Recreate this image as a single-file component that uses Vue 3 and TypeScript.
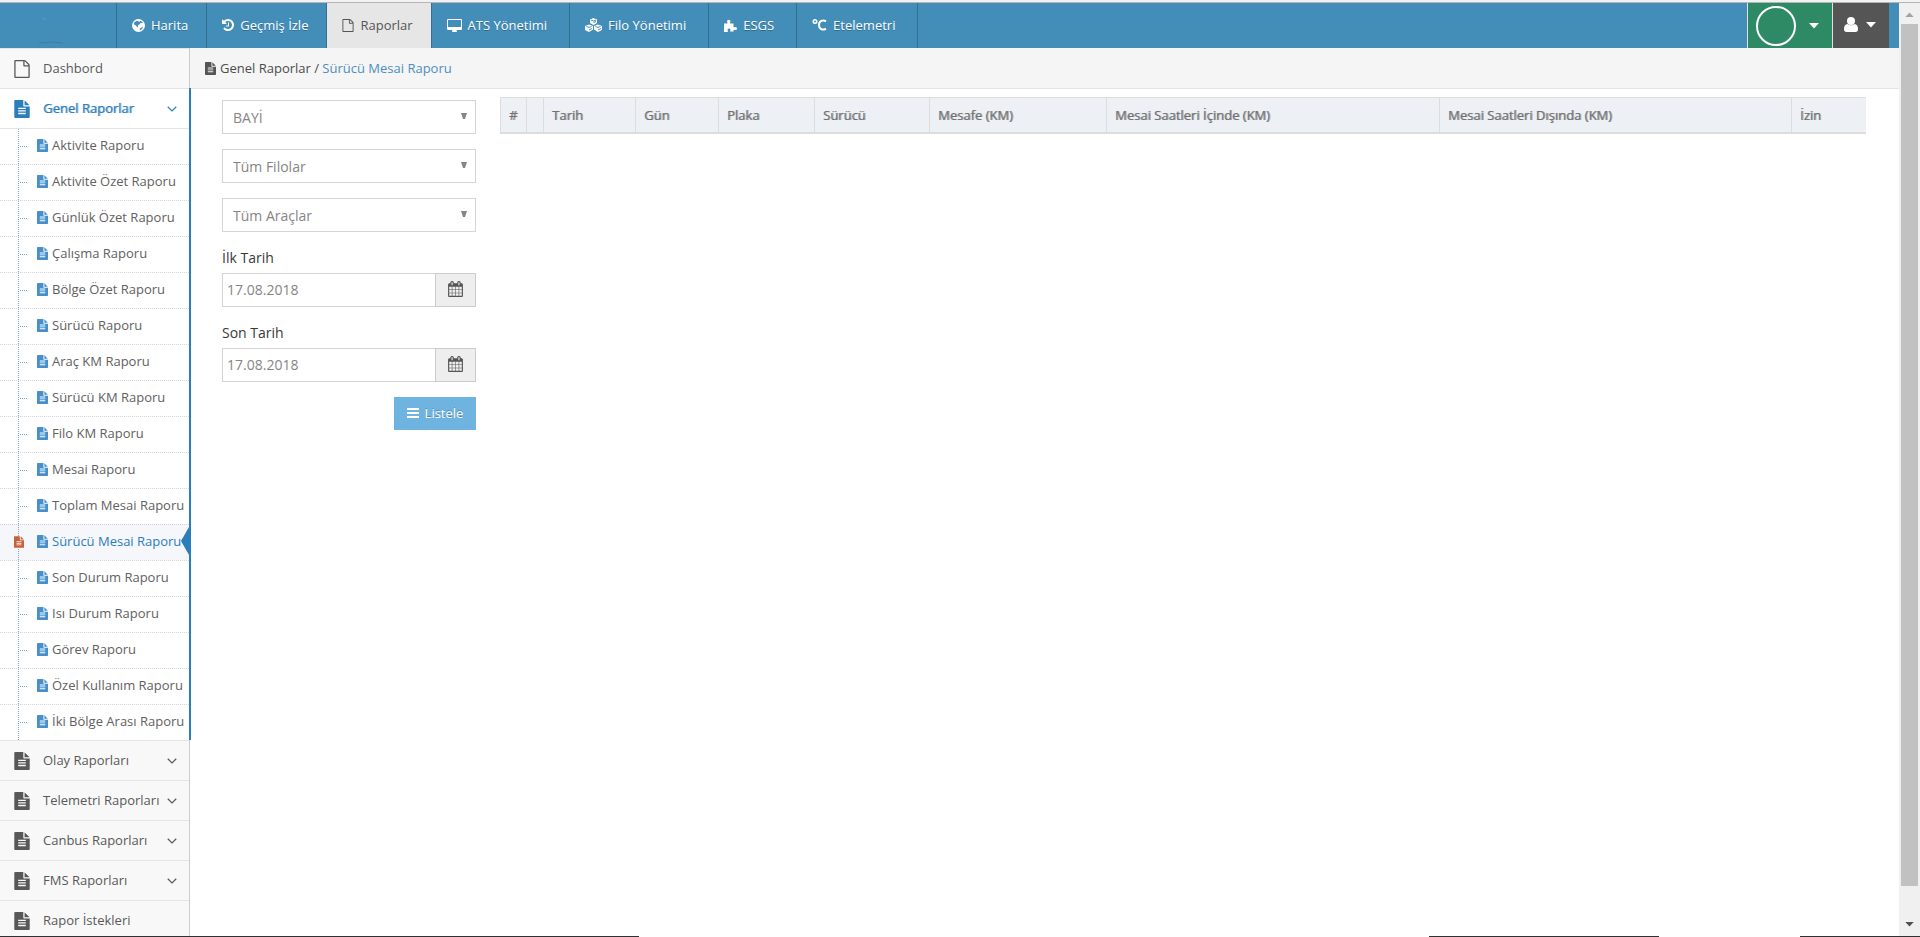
<script setup lang="ts">
interface NavItem { label: string; icon: string; active?: boolean; wide?: boolean }
interface Column { label: string; cls: string }

const nav: NavItem[] = [
  { label: 'Harita', icon: 'globe' },
  { label: 'Geçmiş İzle', icon: 'history' },
  { label: 'Raporlar', icon: 'file', active: true },
  { label: 'ATS Yönetimi', icon: 'desktop', wide: true },
  { label: 'Filo Yönetimi', icon: 'cubes', wide: true },
  { label: 'ESGS', icon: 'puzzle', wide: true },
  { label: 'Etelemetri', icon: 'celsius', wide: true },
]

const reports: string[] = [
  'Aktivite Raporu', 'Aktivite Özet Raporu', 'Günlük Özet Raporu', 'Çalışma Raporu',
  'Bölge Özet Raporu', 'Sürücü Raporu', 'Araç KM Raporu', 'Sürücü KM Raporu',
  'Filo KM Raporu', 'Mesai Raporu', 'Toplam Mesai Raporu', 'Sürücü Mesai Raporu',
  'Son Durum Raporu', 'Isı Durum Raporu', 'Görev Raporu', 'Özel Kullanım Raporu',
  'İki Bölge Arası Raporu',
]
const activeReport = 'Sürücü Mesai Raporu'

const groups = [
  { label: 'Olay Raporları', open: true },
  { label: 'Telemetri Raporları', open: true },
  { label: 'Canbus Raporları', open: true },
  { label: 'FMS Raporları', open: true },
  { label: 'Rapor İstekleri', open: false },
]

const selects = [
  { id: 'dealer', name: 'Bayi', value: 'BAYİ' },
  { id: 'fleet', name: 'Filo', value: 'Tüm Filolar' },
  { id: 'vehicle', name: 'Araç', value: 'Tüm Araçlar' },
]

const dates = [
  { id: 'first-date', label: 'İlk Tarih', value: '17.08.2018' },
  { id: 'last-date', label: 'Son Tarih', value: '17.08.2018' },
]

const columns: Column[] = [
  { label: '#', cls: 'c-no' },
  { label: '', cls: 'c-check' },
  { label: 'Tarih', cls: 'c-date' },
  { label: 'Gün', cls: 'c-day' },
  { label: 'Plaka', cls: 'c-plate' },
  { label: 'Sürücü', cls: 'c-driver' },
  { label: 'Mesafe (KM)', cls: 'c-distance' },
  { label: 'Mesai Saatleri İçinde (KM)', cls: 'c-inside' },
  { label: 'Mesai Saatleri Dışında (KM)', cls: 'c-outside' },
  { label: 'İzin', cls: 'c-leave' },
]
</script>

<template>
  <svg class="defs" aria-hidden="true">
    <symbol id="i-file" viewBox="128 0 1536 1792"><path d="M1596 380q28 28 48 76t20 88v1152q0 40-28 68t-68 28H224q-40 0-68-28t-28-68V96q0-40 28-68t68-28h896q40 0 88 20t76 48zm-444-244v376h376q-10-29-22-41l-313-313q-12-12-41-22zm384 1528V640h-416q-40 0-68-28t-28-68V128H256v1536h1280z" /></symbol>
    <symbol id="i-filetext" viewBox="128 0 1536 1792"><path d="M1596 476q14 14 28 36h-472V40q22 14 36 28zm-476 164h544v1056q0 40-28 68t-68 28H224q-40 0-68-28t-28-68V96q0-40 28-68t68-28h800v544q0 40 28 68t68 28zm160 736v-64q0-14-9-23t-23-9H544q-14 0-23 9t-9 23v64q0 14 9 23t23 9h704q14 0 23-9t9-23zm0-256v-64q0-14-9-23t-23-9H544q-14 0-23 9t-9 23v64q0 14 9 23t23 9h704q14 0 23-9t9-23zm0-256v-64q0-14-9-23t-23-9H544q-14 0-23 9t-9 23v64q0 14 9 23t23 9h704q14 0 23-9t9-23z" /></symbol>
    <symbol id="i-history" viewBox="128 128 1536 1536"><path d="M1664 896q0 156-61 298t-164 245-245 164-298 61q-172 0-327-72.5T305 1387q-7-10-6.5-22.5t8.5-20.5l137-138q10-9 25-9 16 2 23 12 73 95 179 147t225 52q104 0 198.500-40.5T1258 1258t109.500-163.500T1408 896t-40.500-198.500T1258 534t-163.500-109.500T896 384q-98 0-188 35.500T548 521l137 138q31 30 14 69-17 40-59 40H192q-26 0-45-19t-19-45V256q0-42 40-59 39-17 69 14l130 129q107-101 244.500-156.500T896 128q156 0 298 61t245 164 164 245 61 298zM1024 608v448q0 14-9 23t-23 9H672q-14 0-23-9t-9-23v-64q0-14 9-23t23-9h224V608q0-14 9-23t23-9h64q14 0 23 9t9 23z" /></symbol>
    <symbol id="i-desktop" viewBox="-64 0 1920 1664"><path d="M1728 992V160q0-13-9.500-22.500T1696 128H96q-13 0-22.500 9.500T64 160v832q0 13 9.500 22.500t22.500 9.500h1600q13 0 22.500-9.500t9.500-22.500zm128-832v1088q0 66-47 113t-113 47h-544q0 37 16 77.500t32 71 16 43.500q0 26-19 45t-45 19H640q-26 0-45-19t-19-45q0-14 16-44t32-70 16-78H96q-66 0-113-47t-47-113V160Q-64 94-17 47T96 0h1600q66 0 113 47t47 113z" /></symbol>
    <symbol id="i-calendar" viewBox="64 0 1664 1792"><path d="M192 1664h288v-288H192v288zm352 0h320v-288H544v288zm-352-352h288V992H192v320zm352 0h320V992H544v320zM192 928h288V640H192v288zm736 736h320v-288H928v288zM544 928h320V640H544v288zm768 736h288v-288h-288v288zm-384-352h320V992H928v320zM576 448V160q0-13-9.500-22.500T544 128h-64q-13 0-22.500 9.500T448 160v288q0 13 9.500 22.500T480 480h64q13 0 22.500-9.500T576 448zm736 864h288V992h-288v320zM928 928h320V640H928v288zm384 0h288V640h-288v288zm32-480V160q0-13-9.500-22.500T1312 128h-64q-13 0-22.500 9.500T1216 160v288q0 13 9.500 22.500t22.500 9.500h64q13 0 22.500-9.500t9.500-22.500zm384-64v1280q0 52-38 90t-90 38H192q-52 0-90-38t-38-90V384q0-52 38-90t90-38h128v-96q0-66 47-113T480 0h64q66 0 113 47t47 113v96h384v-96q0-66 47-113t113-47h64q66 0 113 47t47 113v96h128q52 0 90 38t38 90z" /></symbol>
    <symbol id="i-globe" viewBox="0 0 24 24"><path fill-rule="evenodd" d="M12 0a12 12 0 1 1 0 24a12 12 0 0 1 0-24zM9 3L4 6l0 4 3 2 3 3 1 0 0-4 3-1 2-3 3 1 1-2-4-3-2 2zM14 17l2 0 4-3-1 4-4 3z" /></symbol>
    <symbol id="i-cubes" viewBox="0 0 34 28"><path d="M17 0l7 3v7l-7 4-7-4V3z" /><path d="M8 13l8 3v7l-8 5-8-4v-8z" /><path d="M26 13l8 3v8l-8 4-8-5v-7z" /><path d="M12 4l5 2 5-2M17 9l5-2M3 17l5 2 5-2M8 24l6-3M21 17l5 2 5-2M26 24l6-3" fill="none" stroke="#438eb9" stroke-width="2" /></symbol>
    <symbol id="i-puzzle" viewBox="0 0 26 26"><path d="M0 9h6c2 0 1-2 0-4a3.500 3.500 0 0 1 7 0c-1 2-2 4 0 4h6v6c0 3 2 1 4 1a3 3 0 0 1 0 6c-2 0-4-2-4 1v2h-6c-2 0 0-2 0-3a3 3 0 0 0-6 0c0 1 2 4 0 4H0z" /></symbol>
    <symbol id="i-celsius" viewBox="0 0 28 24"><circle cx="5" cy="5" r="3.500" fill="none" stroke="currentColor" stroke-width="3" /><path d="M27 4.500C20 1 13 4 13 12s7 11 14 7.500" fill="none" stroke="currentColor" stroke-width="4" /></symbol>
    <symbol id="i-user" viewBox="0 0 28 30"><circle cx="14" cy="8" r="8" /><path d="M7 14q7 5 14 0q7 1 7 10 0 6-5 6H5q-5 0-5-6 0-9 7-10z" /></symbol>
    <symbol id="i-bars" viewBox="0 0 24 20"><path d="M1 0h22q1 0 1 1v2q0 1-1 1H1q-1 0-1-1V1q0-1 1-1zM1 8h22q1 0 1 1v2q0 1-1 1H1q-1 0-1-1V9q0-1 1-1zM1 16h22q1 0 1 1v2q0 1-1 1H1q-1 0-1-1v-2q0-1 1-1z" /></symbol>
    <symbol id="i-down" viewBox="0 0 20 12"><path d="M1.500 1.500L10 10l8.500-8.500" fill="none" stroke="currentColor" stroke-width="2.400" /></symbol>
    <symbol id="i-caret" viewBox="0 0 20 12"><path d="M0 0h20L10 11z" /></symbol>
    <symbol id="i-triangle" viewBox="0 0 6 7"><path d="M0 0h6L4 6H2z" /></symbol>
  </svg>

  <div class="page">
    <div class="chrome-edge"></div>
    <div class="view">
      <div class="app">
        <header class="navbar">
          <a class="brand" href="#" aria-label="Ana sayfa">
            <svg class="logo" viewBox="0 0 40 44"><path d="M2 14l5 2-1 1z" fill="#5f9fc6" /><path d="M0 40q13-2 24 0" stroke="#397fa8" fill="none" /></svg>
          </a>
          <nav class="tabs">
            <a v-for="n in nav" :key="n.label" href="#" class="tab" :class="{ active: n.active, wide: n.wide }">
              <svg :class="['ico', n.icon]"><use :href="'#i-' + n.icon" /></svg>
              <span>{{ n.label }}</span>
            </a>
          </nav>
          <button class="account" type="button" aria-label="Firma">
            <span class="avatar"></span>
            <svg class="caret"><use href="#i-caret" /></svg>
          </button>
          <button class="user" type="button" aria-label="Kullanıcı">
            <svg class="person"><use href="#i-user" /></svg>
            <svg class="caret"><use href="#i-caret" /></svg>
          </button>
        </header>

        <div class="body">
          <aside class="sidebar">
            <a class="group" href="#">
              <svg class="gicon"><use href="#i-file" /></svg>
              <span>Dashbord</span>
            </a>
            <div class="expanded">
              <a class="group current" href="#">
                <svg class="gicon"><use href="#i-filetext" /></svg>
                <span>Genel Raporlar</span>
                <svg class="chev"><use href="#i-down" /></svg>
              </a>
              <ul class="sub">
                <li v-for="r in reports" :key="r" :class="{ selected: r === activeReport }">
                  <svg v-if="r === activeReport" class="marker"><use href="#i-filetext" /></svg>
                  <a href="#"><svg class="sicon"><use href="#i-filetext" /></svg><span>{{ r }}</span></a>
                </li>
              </ul>
            </div>
            <a v-for="g in groups" :key="g.label" class="group" href="#">
              <svg class="gicon"><use href="#i-filetext" /></svg>
              <span>{{ g.label }}</span>
              <svg v-if="g.open" class="chev"><use href="#i-down" /></svg>
            </a>
          </aside>

          <main class="main">
            <div class="crumbs">
              <svg class="cicon"><use href="#i-filetext" /></svg>
              <span>Genel Raporlar / <a href="#">Sürücü Mesai Raporu</a></span>
            </div>
            <div class="content">
              <form class="filters" @submit.prevent>
                <div v-for="s in selects" :key="s.id" class="selectbox">
                  <select :id="s.id" :aria-label="s.name"><option>{{ s.value }}</option></select>
                  <svg class="arrow"><use href="#i-triangle" /></svg>
                </div>
                <div v-for="d in dates" :key="d.id" class="field">
                  <label :for="d.id">{{ d.label }}</label>
                  <div class="inputrow">
                    <input :id="d.id" type="text" :value="d.value">
                    <button type="button" :aria-label="d.label + ' seç'"><svg class="cal"><use href="#i-calendar" /></svg></button>
                  </div>
                </div>
                <button class="list" type="submit"><svg class="bars"><use href="#i-bars" /></svg><span>Listele</span></button>
              </form>
              <div class="tablewrap">
                <table>
                  <thead>
                    <tr><th v-for="c in columns" :key="c.cls" :class="c.cls" scope="col">{{ c.label }}</th></tr>
                  </thead>
                </table>
              </div>
            </div>
          </main>
        </div>
      </div>
      <div class="scrollbar" aria-hidden="true">
        <svg class="sarrow up"><use href="#i-caret" /></svg>
        <div class="thumb"></div>
        <svg class="sarrow"><use href="#i-caret" /></svg>
      </div>
    </div>
    <div class="taskline"><i class="l1"></i><i class="l2"></i><i class="l3"></i></div>
  </div>
</template>

<style>
body { margin: 0; overflow: hidden; }
</style>

<style scoped>
* { box-sizing: border-box; }
svg { display: block; fill: currentColor; flex: none; }
a { text-decoration: none; color: inherit; }
button { border: 0; padding: 0; font: inherit; color: inherit; cursor: pointer; border-radius: 0; }
.defs { position: absolute; width: 0; height: 0; }
.page { position: relative; height: 100vh; display: flex; flex-direction: column; overflow: hidden; background: #fff; color: #393939; font: 13px/20px "Open Sans", sans-serif; }
.chrome-edge { height: 3px; flex: none; background: #f2f2f2; border-bottom: 1px solid #b6b4b6; }
.view { flex: 1; min-height: 0; display: flex; }
.app { flex: 1; min-width: 0; display: flex; flex-direction: column; }
.navbar { height: 45px; flex: none; display: flex; background: #438eb9; color: #fff; padding-right: 10px; }
.brand { width: 116px; padding-left: 39px; }
.logo { width: 40px; height: 44px; }
.tabs { display: flex; margin-right: auto; border-left: 1px solid #31708f; }
.tab { display: flex; align-items: center; padding: 0 18px 1px 15px; border-right: 1px solid #31708f; text-shadow: 0 1px 0 rgba(0, 0, 0, .25); }
.tab.wide { padding-right: 22px; }
.tab span { white-space: nowrap; }
.tab.active { background: #e6e6e6; color: #555; text-shadow: none; }
.ico { margin-right: 6px; width: 13px; height: 13px; }
.ico.history { width: 12px; height: 12px; }
.ico.file { width: 12px; height: 13px; }
.ico.desktop { width: 15px; height: 13px; }
.ico.cubes { width: 17px; height: 14px; }
.ico.celsius { width: 15px; height: 12px; }
.account { width: 85px; background: #2e8965; border-left: 1px solid #e1e1e1; display: flex; align-items: center; padding-left: 8px; }
.avatar { width: 40px; height: 40px; border: 2px solid #fff; border-radius: 50%; margin-right: 13px; }
.caret { width: 10px; height: 6px; }
.user { width: 57px; background: #555; border-left: 1px solid #e1e1e1; display: flex; align-items: center; gap: 8px; padding: 0 0 2px 11px; }
.person { width: 14px; height: 15px; }
.body { flex: 1; min-height: 0; display: flex; }
.sidebar { width: 190px; flex: none; background: #f2f2f2; border-right: 1px solid #ccc; color: #585858; }
.group { height: 40px; display: flex; align-items: center; padding: 0 12px 2px 14px; background: #f8f8f8; border-top: 1px solid #e5e5e5; }
.gicon { width: 16px; height: 18px; margin-right: 13px; margin-top: 2px; }
.group span { white-space: nowrap; }
.chev { width: 10px; height: 6px; margin-left: auto; margin-top: 2px; }
.expanded { margin-right: -2px; border-right: 2px solid #2b7dbc; background: #fff; position: relative; }
.group.current { background: #fff; color: #2b7dbc; padding-right: 12px; }
.group.current span { text-shadow: 1px 0 0 rgba(43, 125, 188, .6); }
.sub { margin: 0; padding: 0; list-style: none; border-top: 1px solid #e5e5e5; position: relative; }
.sub::before { content: ""; position: absolute; left: 18px; top: 0; bottom: 0; border-left: 1px dotted #7fa8c9; z-index: 1; }
.sub li { height: 36px; border-top: 1px dotted #d5d5d5; position: relative; }
.sub li:first-child { height: 35px; border-top: 0; }
.sub li::before { content: ""; position: absolute; left: 20px; top: 17px; width: 7px; border-top: 1px dotted #7fa8c9; }
.sub a { display: flex; align-items: center; height: 32px; padding-left: 37px; color: #616161; white-space: nowrap; }
.sicon { width: 11px; height: 13px; margin-right: 4px; margin-top: 1px; color: #478fca; }
.selected { background: #f5f7fa; }
.sub .selected a { color: #2b7dbc; }
.sub .selected::before { display: none; }
.selected::after { content: ""; position: absolute; right: 0; top: 2px; border: solid transparent; border-width: 14px 8px 14px 0; border-right-color: #2b7dbc; }
.marker { position: absolute; left: 14px; top: 11px; width: 10px; height: 12px; color: #c86139; background: #f5f7fa; z-index: 2; }
.main { flex: 1; min-width: 0; background: #fff; }
.crumbs { height: 41px; display: flex; align-items: center; padding-left: 15px; background: #f5f5f5; border-bottom: 1px solid #e5e5e5; color: #4c4c4c; }
.cicon { width: 11px; height: 13px; margin-right: 4px; color: #555; }
.crumbs a { color: #4c8fbd; }
.content { display: flex; padding: 8px 33px 0 32px; gap: 24px; align-items: flex-start; }
.filters { width: 254px; flex: none; display: flex; flex-direction: column; padding-top: 3px; font-size: 14px; }
.selectbox { position: relative; height: 34px; margin-bottom: 15px; }
.selectbox select { appearance: none; width: 100%; height: 34px; padding: 2px 10px 0; border: 1px solid #d5d5d5; border-radius: 0; background: #fff; color: #858585; font: 14px/20px "Open Sans", sans-serif; }
.arrow { position: absolute; right: 9px; top: 13px; width: 6px; height: 7px; color: #858585; }
.field { margin-bottom: 15px; }
.field label { display: block; height: 26px; line-height: 22px; color: #393939; }
.inputrow { display: flex; height: 34px; }
.inputrow input { flex: 1; min-width: 0; border: 1px solid #d5d5d5; border-right: 0; padding: 0 4px; color: #858585; font: 14px/20px "Open Sans", sans-serif; border-radius: 0; }
.inputrow button { width: 41px; border: 1px solid #ccc; background: #eee; color: #555; display: flex; justify-content: center; align-items: center; padding-bottom: 3px; }
.cal { width: 15px; height: 16px; }
.list { align-self: flex-end; height: 33px; width: 82px; padding-bottom: 2px; background: #6fb3e0; color: #fff; font-size: 13px; display: flex; align-items: center; justify-content: center; gap: 6px; text-shadow: 0 -1px 0 rgba(0, 0, 0, .25); }
.bars { width: 12px; height: 10px; }
.tablewrap { flex: 1; min-width: 0; }
table { width: 100%; table-layout: fixed; border-collapse: collapse; }
th { height: 35px; padding: 0 8px; text-align: left; font-weight: 400; text-shadow: 1px 0 0 rgba(112, 112, 112, .6); color: #707070; background: #edf1f6; border: 1px solid #ddd; border-bottom-width: 2px; white-space: nowrap; }
th:last-child { border-right: 0; }
.c-no { width: 26px; }
.c-check { width: 17px; }
.c-date { width: 92px; }
.c-day { width: 83px; }
.c-plate { width: 96px; }
.c-driver { width: 115px; }
.c-distance { width: 177px; }
.c-inside { width: 333px; }
.c-outside { width: 352px; }
.scrollbar { width: 21px; flex: none; background: #f0f0f0; display: flex; flex-direction: column; align-items: center; padding: 9px 1px 10px 0; }
.sarrow { width: 9px; height: 5px; color: #505050; }
.sarrow.up { transform: rotate(180deg); color: #a3a3a3; }
.thumb { width: 17px; flex: 1; margin: 7px 0 36px; background: #c1c1c1; }
.taskline { position: absolute; left: 0; right: 0; bottom: 0; height: 1px; display: flex; }
.taskline i { background: #2f3133; }
.l1 { width: 639px; }
.l2 { width: 230px; margin-left: 790px; }
.l3 { flex: 1; margin-left: 141px; }
</style>
